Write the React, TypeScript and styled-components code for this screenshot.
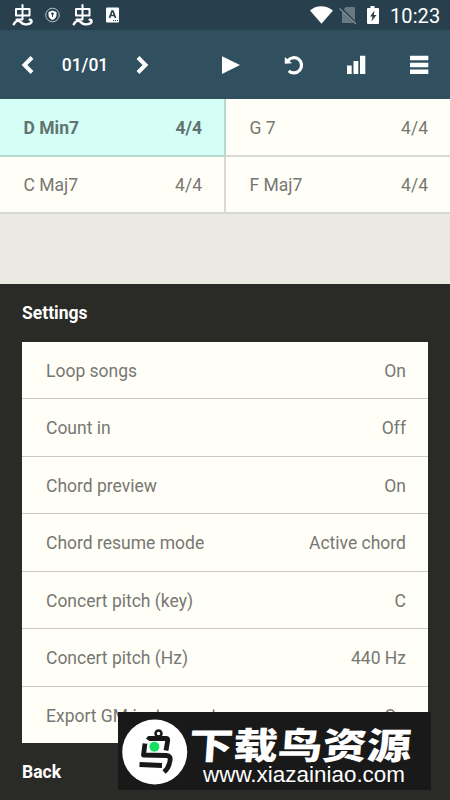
import React from "react";
import styled, { createGlobalStyle } from "styled-components";

const GlobalStyle = createGlobalStyle`
  * { box-sizing: border-box; }
  body { margin: 0; background: #2a2a26; font-family: Roboto, sans-serif; }
`;

const Screen = styled.main`
  position: relative;
  display: flex;
  flex-direction: column;
  width: 450px;
  height: 800px;
  overflow: hidden;
  background: #eaeae3;
  color: #777773;
  font-size: 17.5px;
`;

const StatusBar = styled.header`
  display: flex;
  justify-content: space-between;
  height: 30px;
  background: #28404e;
  color: #fff;
`;

const StatusIcons = styled.svg`
  display: block;
  height: 30px;
`;

const StatusRight = styled.div`
  display: flex;
  align-items: center;
`;

const Clock = styled.time`
  width: 61px;
  font-size: 20px;
  line-height: 30px;
  letter-spacing: 0.1px;
  padding: 1px 0 0 1px;
`;

const Toolbar = styled.nav`
  display: flex;
  align-items: center;
  height: 69px;
  padding: 0 13px 0 10px;
  background: #31505f;
  color: #fff;
`;

const ToolButton = styled.button<{ $gap?: number }>`
  display: grid;
  place-items: center;
  width: 36px;
  height: 40px;
  margin: 0 0 0 ${(p) => p.$gap ?? 0}px;
  padding: 0;
  border: 0;
  background: none;
  color: inherit;
`;

const Counter = styled.span`
  width: 78px;
  text-align: center;
  font-size: 17.5px;
  font-weight: 500;
`;

const ChordGrid = styled.section`
  display: grid;
  grid-template-columns: 226px 224px;
  grid-template-rows: 57.5px 57px;
`;

const ChordCell = styled.div<{ $active?: boolean; $divided?: boolean }>`
  display: flex;
  align-items: center;
  justify-content: space-between;
  padding: 2.5px 22px 0 23.5px;
  background: ${(p) => (p.$active ? "#d5fef7" : "#fffff8")};
  border-bottom: 2px solid ${(p) => (p.$active ? "#b9d8d3" : "#dadad4")};
  border-right: ${(p) => (p.$divided ? "2px solid " + (p.$active ? "#b9d8d3" : "#dadad4") : "0")};
  font-weight: ${(p) => (p.$active ? 700 : 400)};
  color: ${(p) => (p.$active ? "#61746f" : "#777773")};
`;

const SettingsPanel = styled.section`
  flex: none;
  height: 516px;
  margin-top: auto;
  padding: 0 22px;
  background: #2a2a26;
  color: #fff;
`;

const PanelTitle = styled.h2`
  height: 58px;
  margin: 0;
  font-size: 17.5px;
  line-height: 58px;
  font-weight: 700;
`;

const SettingsList = styled.div`
  width: 406px;
  height: 400.5px;
  overflow: hidden;
  background: #fffff8;
`;

const SettingRow = styled.div`
  display: flex;
  align-items: center;
  justify-content: space-between;
  height: 57.5px;
  padding: 1.5px 22px 0 24px;
  border-bottom: 1px solid #c9c9c3;
  color: #777773;

  &:first-child {
    height: 57px;
  }

  &:last-child {
    border-bottom: 0;
  }
`;

const BackButton = styled.button`
  display: block;
  height: 57px;
  padding: 1px 0 0;
  border: 0;
  background: none;
  color: #fff;
  font: 700 17.5px Roboto, sans-serif;
`;

const Watermark = styled.aside`
  position: absolute;
  left: 118px;
  top: 712px;
  width: 313px;
  height: 78px;
  display: flex;
  background: #191919;
  color: #fff;
`;

const MarkSvg = styled.svg`
  display: block;
`;

const Bug = ({ x }: { x: number }) => (
  <g transform={`translate(${x} 0)`} fill="none" stroke="#fff" strokeWidth="2" strokeLinecap="round" strokeLinejoin="round">
    <path d="M3.5 9h13.500v6.500H3.500zM10 5v14M4 19.500h6" />
    <path d="M1.300 24.300c1.700-4 5-4.500 7-2.200s6 3 9.500 1.200c2-1.200 1.500-3.800-.6-3.600" strokeWidth="2.500" />
  </g>
);

const chords = [
  ["D Min7", "4/4"],
  ["G 7", "4/4"],
  ["C Maj7", "4/4"],
  ["F Maj7", "4/4"],
];

const settings = [
  ["Loop songs", "On"],
  ["Count in", "Off"],
  ["Chord preview", "On"],
  ["Chord resume mode", "Active chord"],
  ["Concert pitch (key)", "C"],
  ["Concert pitch (Hz)", "440 Hz"],
  ["Export GM instrument map", "On"],
];

export default function App() {
  return (
    <>
      <GlobalStyle />
      <Screen>
        <StatusBar>
          <StatusIcons width="130" viewBox="0 0 130 30">
            <Bug x={12.5} />
            <circle cx="52.5" cy="15" r="6.8" fill="none" stroke="#b5c0c6" strokeWidth="1" />
            <path d="M52.5 10.5l4 1.4v3c0 2.4-2 4-4 5-2-1-4-2.600-4-5v-3z" fill="#fff" />
            <path d="M52.5 14v3" stroke="#28404e" />
            <circle cx="52.500" cy="13.800" r="1.300" fill="#28404e" />
            <Bug x={72.5} />
            <rect x="106" y="7.500" width="13" height="15" rx="1" fill="#fff" />
            <path d="M109.500 18l2.500-7h1l2.500 7M110 15.500h5" fill="none" stroke="#28404e" strokeWidth="1.700" />
            <path d="M113 20.500h5" stroke="#28404e" strokeDasharray="1 1" />
          </StatusIcons>
          <StatusRight>
            <StatusIcons width="80" viewBox="0 0 80 30">
              <path d="M1 10.500C7 4.800 17 4.800 24 10.500L12.500 23.800z" fill="#fff" />
              <path d="M37 7h8q1 0 1 1v14q0 1-1 1H33V11z" fill="#687b85" />
              <path d="M31 7.500l16 16" stroke="#28404e" strokeWidth="2.500" />
              <path d="M30.500 8.500L47 24" stroke="#82919a" strokeWidth="1.300" />
              <path d="M61.500 6h4v2H69q1 0 1 1v14q0 1-1 1H59q-1 0-1-1V9q0-1 1-1h2.500z" fill="#fff" />
              <path d="M65.500 10.500l-4.500 6h2.500l-1 5 5-6.500h-2.700z" fill="#28404e" />
            </StatusIcons>
            <Clock>10:23</Clock>
          </StatusRight>
        </StatusBar>
        <Toolbar>
          <ToolButton aria-label="Previous">
            <svg width="20" height="20" viewBox="0 0 20 20"><path d="M14 2.500L6.500 10l7.500 7.500" fill="none" stroke="#fff" strokeWidth="4" /></svg>
          </ToolButton>
          <Counter>01/01</Counter>
          <ToolButton aria-label="Next">
            <svg width="20" height="20" viewBox="0 0 20 20"><path d="M6 2.500l7.500 7.500L6 17.500" fill="none" stroke="#fff" strokeWidth="4" /></svg>
          </ToolButton>
          <ToolButton $gap={53} aria-label="Play">
            <svg width="20" height="20" viewBox="0 0 20 20"><path d="M1 1.200L19 10 1 19z" fill="#fff" /></svg>
          </ToolButton>
          <ToolButton $gap={26.500} aria-label="Restart">
            <svg width="20" height="20" viewBox="0 0 20 20">
              <path d="M3.800 5.800A7.600 7.600 0 1 1 4.700 15.800" fill="none" stroke="#fff" strokeWidth="3.200" />
              <path d="M.8 2L8 8.300l-7.200.5z" fill="#fff" />
            </svg>
          </ToolButton>
          <ToolButton $gap={26.500} aria-label="Levels">
            <svg width="20" height="20" viewBox="0 0 20 20"><path d="M1 10.500h4.700V19H1zM7.500 6h4.800v13H7.500zM14 .8h5.300V19H14z" fill="#fff" /></svg>
          </ToolButton>
          <ToolButton $gap={26.500} aria-label="Menu">
            <svg width="20" height="20" viewBox="0 0 20 20"><path d="M1 .8h18.300v4.500H1zM1 7.800h18.300v4.500H1zM1 14.600h18.300v4.500H1z" fill="#fff" /></svg>
          </ToolButton>
        </Toolbar>
        <ChordGrid>
          {chords.map(([name, meter], i) => (
            <ChordCell key={name} $active={i === 0} $divided={i % 2 === 0}>
              <span>{name}</span>
              <span>{meter}</span>
            </ChordCell>
          ))}
        </ChordGrid>
        <SettingsPanel>
          <PanelTitle>Settings</PanelTitle>
          <SettingsList>
            {settings.map(([label, value]) => (
              <SettingRow key={label}>
                <span>{label}</span>
                <span>{value}</span>
              </SettingRow>
            ))}
          </SettingsList>
          <BackButton>Back</BackButton>
        </SettingsPanel>
        <Watermark>
          <MarkSvg width="313" height="78" viewBox="0 0 313 78">
            <circle cx="36.700" cy="40" r="32.500" fill="#fff" />
            <g fill="none" stroke="#181818" strokeWidth="4.800" strokeLinejoin="round">
              <circle cx="40.500" cy="21.500" r="3" strokeWidth="2.500" />
              <path d="M30 28l1-1.500h17.500q1.500 0 1.200 2L48 38.500" />
              <path d="M27 31.500l-1.500 11.500 23 .5q4.500.5 3.500 5-1 7.500-6 11.500" />
              <path d="M21.500 52.500l22.500 1" />
            </g>
            <circle cx="36.400" cy="34.800" r="5" fill="#16df61" />
            <g transform="translate(70 46.500) skewX(-4) scale(1.220 1)">
              <text fill="#fff" fontFamily="'Noto Sans CJK SC', sans-serif" fontWeight="900" fontSize="36.500">下载鸟资源</text>
            </g>
            <text x="85" y="70" fill="#fff" fontFamily="'Liberation Sans', sans-serif" fontSize="22" textLength="202" lengthAdjust="spacingAndGlyphs">www.xiazainiao.com</text>
          </MarkSvg>
        </Watermark>
      </Screen>
    </>
  );
}
